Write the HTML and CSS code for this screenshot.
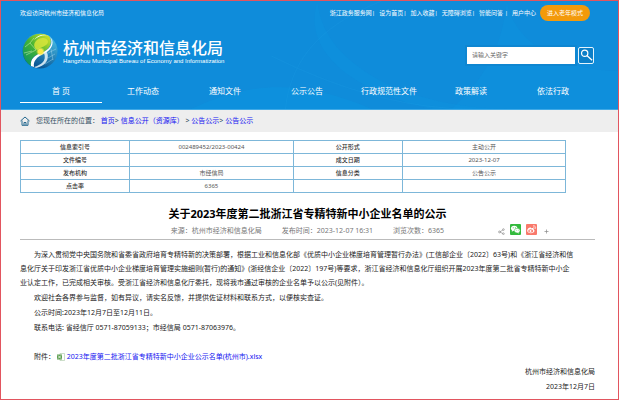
FILE: index.html
```html
<!DOCTYPE html>
<html lang="zh-CN">
<head>
  <meta charset="UTF-8" />
  <meta name="viewport" content="width=device-width, initial-scale=1.0"/>
  <title>杭州市经济和信息化局</title>
  <link rel="stylesheet" href="styles.css">
</head>
<body>
  <div class="page">
    <header class="header">
      <!-- Background curves -->
      <svg class="header-bg" viewBox="0 0 616 108" preserveAspectRatio="none" aria-hidden="true">
        <path d="M190 108 C250 80 300 78 370 108Z" fill="#0a9ae6" opacity=".3"/>
        <path d="M316 0 C320 60 400 110 520 108 L430 108 C350 90 300 50 316 0Z" fill="#0a9ae6" opacity=".2"/>
        <path d="M505 0 C500 50 480 80 450 108 L616 108 L616 70 C560 70 510 40 505 0Z" fill="#0a9ae6" opacity=".2"/>
        <path d="M284 108 C290 50 330 20 380 0 M270 55 C330 85 400 108 470 108" fill="none" stroke="#2ba5ea" stroke-width="1" opacity=".15"/>
      </svg>

      <div class="topbar">
        <span>欢迎访问杭州市经济和信息化局</span>
        <div class="top-links">
          <a href="#">浙江政务服务网|</a>
          <a href="#">设为首页|</a>
          <a href="#">加入收藏|</a>
          <a href="#">无障碍浏览|</a>
          <a href="#">智能问答 |</a>
          <a href="#">用户中心</a>
          <button type="button" class="elder-btn">进入老年模式</button>
        </div>
      </div>

      <div class="brand-row">
        <div class="brand">
          <svg class="logo" viewBox="0 0 36 36" aria-hidden="true">
            <defs>
              <linearGradient id="leaf" x1="0" y1=".8" x2=".8" y2="0">
                <stop offset="0" stop-color="#0f9560"/>
                <stop offset=".5" stop-color="#45b434"/>
                <stop offset="1" stop-color="#c3dc2c"/>
              </linearGradient>
              <linearGradient id="sea" x1=".8" y1=".2" x2=".4" y2="1">
                <stop offset="0" stop-color="#3fb0dc"/>
                <stop offset="1" stop-color="#064f8e"/>
              </linearGradient>
              <radialGradient id="sun">
                <stop offset="0" stop-color="#ffe93a"/>
                <stop offset=".5" stop-color="#f6e84a"/>
                <stop offset="1" stop-color="#f6e84a" stop-opacity="0"/>
              </radialGradient>
            </defs>
            <circle cx="18" cy="18" r="17.500" fill="url(#sea)"/>
            <path d="M27 3 A17.500 17.500 0 0 0 9 33 C8 26 12 22 19 20 C28 17 31 9 27 3Z" fill="url(#leaf)"/>
            <path d="M12 7 C17 2 25 1 28 4 C32 10 28 17 19 20 C13 22 8 26 9 33 L12 34 C11 28 15 24 21 21 C29 18 33 10 29 5 C25 0 16 1 12 7Z" fill="#fff"/>
            <path d="M14 8 C17 4 26 4 26 9 C26 13 18 14 15 17 C12 15 11 11 14 8Z" fill="#d7e53b" opacity=".85"/>
            <path d="M12 34 C19 32 25 28 22 20 L25 19 C28 27 23 33 14 35Z" fill="#eaf7fd" opacity=".85"/>
            <path d="M3 14 L8 10 L14 17 L4 22 M8 10 L12 5 M2 20 L10 18" fill="none" stroke="#d9f2b8" stroke-width=".7" opacity=".7"/>
            <path d="M26 20 L34 16 M26 25 L33 21 M29 16 L31 27 M23 31 L31 26" fill="none" stroke="#c5ecf8" stroke-width=".6" opacity=".6"/>
            <circle cx="18.500" cy="18.500" r="4.500" fill="url(#sun)"/>
          </svg>
          <div>
            <h1>杭州市经济和信息化局</h1>
            <p>Hangzhou Municipal Bureau of Economy and Informatization</p>
          </div>
        </div>
        <form class="search">
          <input type="text" aria-label="搜索" placeholder="请输入关键字">
          <button type="submit" aria-label="搜索">
            <svg viewBox="0 0 16 16"><circle cx="6.500" cy="6" r="3.600"/><path d="M9 8.500 L15 14"/></svg>
          </button>
        </form>
      </div>

      <nav class="nav">
        <a href="#" class="active">首 页</a>
        <a href="#">工作动态</a>
        <a href="#">通知文件</a>
        <a href="#">公示公告</a>
        <a href="#">行政规范性文件</a>
        <a href="#">政策解读</a>
        <a href="#">依法行政</a>
      </nav>
    </header>

    <div class="crumbs">
      <svg viewBox="0 0 10 10" aria-hidden="true"><path d="M.5 5 L5 1 L9.500 5 M2 4.500 V9.300 H8 V4.500 M4 9 V6.500 H6 V9"/></svg>
      <p>您现在所在的位置： <a href="#">首页</a>&gt; <a href="#">信息公开（资源库）</a> &gt; <a href="#">公告公示</a>&gt; <a href="#">公告公示</a></p>
    </div>

    <main class="content">
      <table class="info">
        <tr><th>信息索引号</th><td>002489452/2023-00424</td><th>公开形式</th><td>主动公开</td></tr>
        <tr><th>文件编号</th><td></td><th>成文日期</th><td>2023-12-07</td></tr>
        <tr><th>发布机构</th><td>市经信局</td><th>信息分类</th><td>公告公示</td></tr>
        <tr><th>点击率</th><td>6365</td><th></th><td></td></tr>
      </table>

      <h2>关于2023年度第二批浙江省专精特新中小企业名单的公示</h2>

      <div class="meta">
        <span></span>
        <div class="meta-text">
          <span>来源：杭州市经济和信息化局</span>
          <span>发布时间：2023-12-07 16:31</span>
          <span>浏览次数：6365</span>
        </div>
        <div class="share">
          <svg class="share-icon" viewBox="0 0 8 8" aria-hidden="true"><path d="M2 4.500 L6 2 M2 4.500 L6 6.500"/><circle cx="1.700" cy="4.500" r="1.100"/><circle cx="6.200" cy="1.800" r="1"/><circle cx="6.200" cy="6.500" r="1"/></svg>
          <a href="#" class="wechat" aria-label="微信">
            <svg viewBox="0 0 11 11"><ellipse cx="4.200" cy="4.300" rx="3.200" ry="2.600" fill="#fff"/><path d="M2 6 L1.800 7.800 L4 6.500Z" fill="#fff"/><ellipse cx="7.200" cy="6.600" rx="2.900" ry="2.300" fill="#fff" stroke="#33ba3d" stroke-width=".5"/><path d="M8.500 8.300 L9 9.600 L7 8.700Z" fill="#fff"/><g fill="#33ba3d"><circle cx="3.200" cy="3.700" r=".5"/><circle cx="5.300" cy="3.700" r=".5"/><circle cx="6.300" cy="6.200" r=".4"/><circle cx="8.200" cy="6.200" r=".4"/></g></svg>
          </a>
          <a href="#" class="weibo" aria-label="微博">
            <svg viewBox="0 0 11 11"><path d="M5 3.500 C3 3 1.200 5 1.200 6.700 C1.200 10 8.500 10 8.500 6.800 C8.500 5.900 7.600 5.600 7.600 5 C7.600 4 6.500 3.700 5 4.500Z" fill="#fff"/><ellipse cx="4.700" cy="6.900" rx="2.500" ry="1.700" fill="#f9796b"/><circle cx="4.500" cy="7" r="1" fill="#fff"/><path d="M7 1.800 C9 1.500 10 3 9.500 4.700 M7.200 3.200 C8.200 3.200 8.500 3.800 8.200 4.600" fill="none" stroke="#fff" stroke-width=".7"/></svg>
          </a>
          <a href="#" class="more" aria-label="更多"><svg viewBox="0 0 5 5"><path d="M2.500 .5 V4.500 M.5 2.500 H4.500"/></svg></a>
        </div>
      </div>

      <article class="article">
        <p>为深入贯彻党中央国务院和省委省政府培育专精特新的决策部署，根据工业和信息化部《优质中小企业梯度培育管理暂行办法》(工信部企业〔2022〕63号)和《浙江省经济和信<br>息化厅关于印发浙江省优质中小企业梯度培育管理实施细则(暂行)的通知》(浙经信企业〔2022〕197号)等要求，浙江省经济和信息化厅组织开展2023年度第二批省专精特新中小企<br>业认定工作，已完成相关审核。受浙江省经济和信息化厅委托，现将我市通过审核的企业名单予以公示(见附件）。</p>
        <p>欢迎社会各界参与监督，如有异议，请实名反馈，并提供佐证材料和联系方式，以便核实查证。</p>
        <p>公示时间:2023年12月7日至12月11日。</p>
        <p>联系电话: 省经信厅 0571-87059133；市经信局 0571-87063976。</p>
        <p class="attachment">附件：
          <svg viewBox="0 0 8 8" aria-hidden="true"><path d="M3 .5 H7.500 V7.500 H3Z" fill="#fff" stroke="#a9c7a4" stroke-width=".6"/><path d="M0 1.500 H5 V6.500 H0Z" fill="#5fa052"/><path d="M1 2.500 L4 5.500 M4 2.500 L1 5.500" stroke="#fff" stroke-width=".8"/></svg>
          <a href="#">2023年度第二批浙江省专精特新中小企业公示名单(杭州市).xlsx</a></p>
        <p class="sign">杭州市经济和信息化局</p>
        <p class="sign">2023年12月7日</p>
      </article>
    </main>
  </div>
</body>
</html>
```
FILE: styles.css
```css
body {
  margin: 0;
  padding: 0 3px 3px 0;
  background: #fff;
  color: #222;
  font-family: "Noto Sans", "Noto Sans CJK SC", sans-serif;
  font-size: 7px;
  line-height: 14px;
}

h1, h2, p {
  margin: 0;
}

a {
  color: #1414f0;
  text-decoration: none;
}

button, input {
  font-family: inherit;
  box-sizing: border-box;
}

.page {
  border: 1px solid #e2555f;
}

.header {
  position: relative;
  padding: 0 24px 0 19px;
  background: #0f8cda;
  border-bottom: 1px solid #3fa9e6;
  color: #fff;
}

.header a {
  color: #fff;
}

.header-bg {
  position: absolute;
  inset: 0;
  width: 100%;
  height: 100%;
}

.topbar, .brand-row, .nav {
  position: relative;
  display: flex;
}

.topbar {
  justify-content: space-between;
  align-items: center;
  height: 24px;
  padding-right: 4px;
  font-size: 6px;
}

.top-links {
  display: flex;
  align-items: center;
  gap: 4px;
}

.elder-btn {
  width: 50px;
  height: 16px;
  padding: 0;
  border: none;
  border-radius: 8px;
  background: #f39a0b;
  color: #fff;
  font-size: 6px;
  line-height: 14px;
  white-space: nowrap;
}

.brand-row {
  justify-content: space-between;
  align-items: center;
  height: 52px;
}

.brand {
  display: flex;
  align-items: center;
  gap: 5px;
  padding-left: 2px;
}

.logo {
  width: 36px;
  height: 36px;
}

.brand h1 {
  font-size: 16px;
  font-weight: 500;
  line-height: 20px;
}

.brand p {
  font-family: "Liberation Sans", Arial, sans-serif;
  font-size: 6px;
  line-height: 6px;
}

.search {
  display: flex;
  gap: 3px;
  padding-top: 8px;
}

.search input {
  width: 108px;
  height: 17px;
  padding: 0 5px;
  border: none;
  background: #fff;
  box-shadow: 0 0 0 2px #0e86d1;
  font-size: 6px;
}

.search input::placeholder {
  color: #666;
}

.search button {
  width: 16px;
  height: 17px;
  padding: 0;
  border: 1px solid #e4f4fd;
  border-radius: 2px;
  background: #0c7fc8;
}

.search svg {
  display: block;
  width: 100%;
  fill: none;
  stroke: #fff;
  stroke-width: 1.4;
}

.nav {
  height: 32px;
}

.nav a {
  flex: 1;
  height: 25px;
  border-bottom: 1px solid transparent;
  font-size: 8px;
  line-height: 27px;
  text-align: center;
}

.nav .active {
  border-color: #fff;
}

.crumbs {
  display: flex;
  align-items: center;
  gap: 6px;
  height: 22px;
  padding: 0 19px;
  background: #eee;
  color: #345064;
}

.crumbs svg {
  width: 10px;
  height: 10px;
  fill: none;
  stroke: #24688f;
  stroke-width: 1;
}

.content {
  padding: 8px 23px 4px 19px;
}

.info {
  width: 95%;
  border-collapse: collapse;
  table-layout: fixed;
  font-size: 6px;
  line-height: 12px;
}

.info th, .info td {
  width: 30%;
  height: 12px;
  padding: 0;
  border: 1px solid #7db7d9;
  color: #555;
  text-align: center;
}

.info th {
  width: 20%;
  color: #333;
  font-weight: 500;
}

.content h2 {
  margin-top: 13px;
  color: #000;
  font-size: 11px;
  font-weight: 700;
  line-height: 16px;
  text-align: center;
}

.meta {
  display: grid;
  grid-template-columns: 1fr auto 1fr;
  align-items: center;
  height: 17px;
  border-bottom: 1px solid #bbb;
  color: #777;
}

.meta-text {
  display: flex;
  gap: 20px;
}

.share {
  display: flex;
  justify-content: flex-end;
  align-items: center;
  gap: 5px;
  padding: 0 46px 3px 0;
}

.share svg {
  display: block;
  width: 11px;
  height: 11px;
}

.share .share-icon {
  width: 7px;
  height: 7px;
  margin-top: 5px;
}

.share-icon, .more svg {
  fill: none;
  stroke: #888;
  stroke-width: .7;
}

.share .more svg {
  width: 5px;
  height: 5px;
  margin: 5px 0 0 2px;
}

.wechat {
  border-radius: 1px;
  background: #33ba3d;
}

.weibo {
  border-radius: 1px;
  background: #f9796b;
}

.article {
  padding-top: 8px;
}

.article p {
  margin-bottom: 1px;
  text-indent: 2em;
  white-space: nowrap;
}

.article .attachment {
  margin-top: 15px;
}

.attachment svg {
  width: 8px;
  height: 8px;
  vertical-align: middle;
}

.article .sign {
  text-align: right;
}
```
